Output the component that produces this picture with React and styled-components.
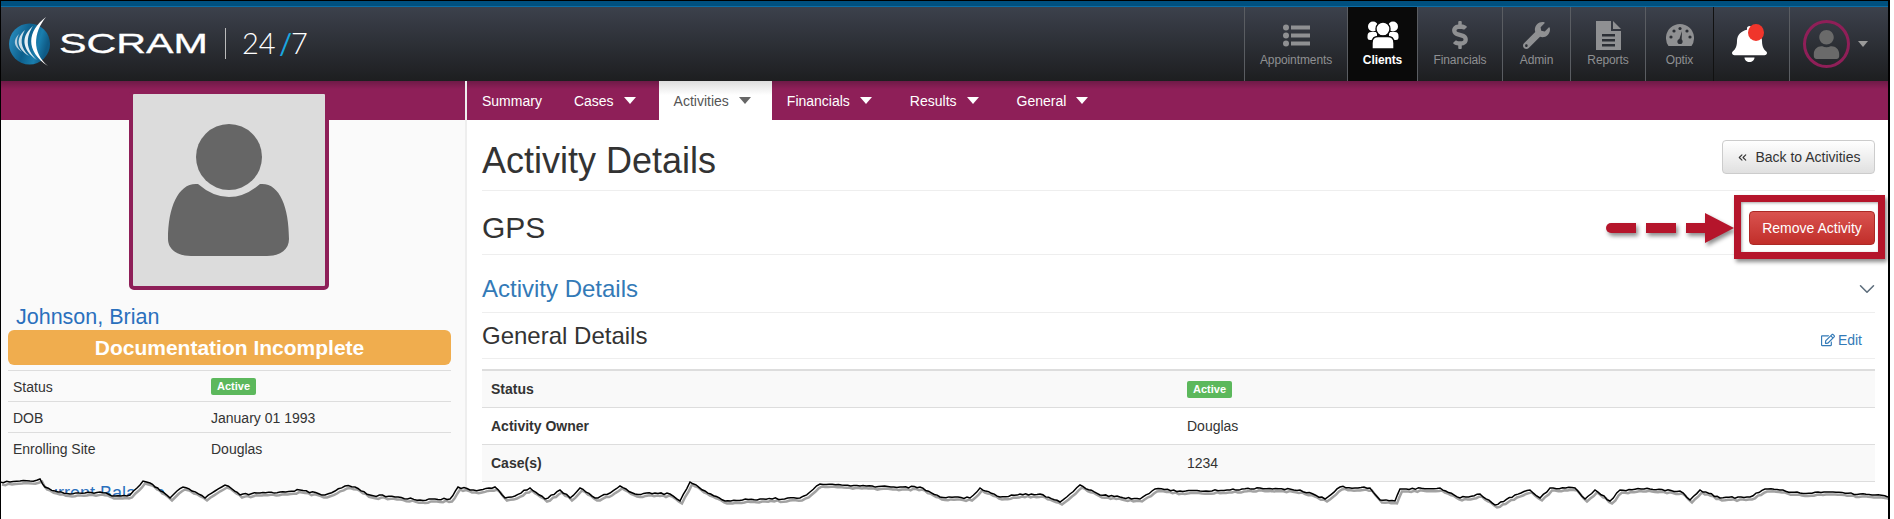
import React from 'react';
import styled, { createGlobalStyle } from 'styled-components';
import { FaDollarSign, FaWrench, FaBell, FaUser, FaRegEdit } from 'react-icons/fa';
import { ChevronDown, ChevronsLeft } from 'lucide-react';

const GlobalStyle = createGlobalStyle`
  html, body {
    margin: 0;
    background: #fff;
    overflow: hidden;
  }
  * { box-sizing: border-box; }
`;

const Page = styled.div`
  position: relative;
  width: 1890px;
  height: 519px;
  overflow: hidden;
  border-left: 1px solid #000;
  border-right: 2px solid #000;
  border-top: 1px solid #000;
  background: #fff;
  font-family: "Liberation Sans", Arial, sans-serif;
  font-size: 14px;
  color: #333;
`;

const BlueBand = styled.div`
  height: 6px;
  background: #00507f;
  border-bottom: 1px solid #0a6ea8;
`;

const Header = styled.header`
  display: flex;
  justify-content: space-between;
  height: 74px;
  background: linear-gradient(#3c414c, #1d1e20);
`;

const LogoWrap = styled.svg`
  width: 320px;
  height: 74px;
  flex: none;
`;

const NavList = styled.nav`
  display: flex;
  height: 74px;
`;

const NavItem = styled.div`
  width: ${({ $w }) => $w}px;
  display: flex;
  flex-direction: column;
  align-items: center;
  padding-top: 14px;
  border-left: 1px solid #5a5d62;
  color: ${({ $active }) => ($active ? '#fff' : '#8f9092')};
  background: ${({ $active }) => ($active ? '#0a0a0a' : 'transparent')};
  font-size: 12px;
  letter-spacing: -0.1px;
  font-weight: ${({ $active }) => ($active ? 700 : 400)};
`;

const NavIcon = styled.div`
  height: 28px;
  display: flex;
  align-items: center;
  justify-content: center;
  font-size: ${({ $size }) => $size || 26}px;
  margin-bottom: 4px;
`;

const BellItem = styled.div`
  position: relative;
  width: 76px;
  display: flex;
  align-items: center;
  justify-content: center;
  border-left: 1px solid #111;
  color: #fff;
`;

const BellIcon = styled(FaBell)`
  width: 35px;
  height: 36px;
  margin-right: 4px;
`;

const BellDot = styled.span`
  position: absolute;
  left: 34px;
  top: 17px;
  width: 16px;
  height: 17px;
  border-radius: 50%;
  background: #f0352b;
`;

const UserItem = styled.div`
  width: 99px;
  display: flex;
  align-items: center;
  padding-left: 13px;
  gap: 8px;
  border-left: 1px solid #5a5d62;
`;

const UserRing = styled.div`
  width: 47px;
  height: 48px;
  border: 3px solid #8f1f58;
  border-radius: 50%;
  display: flex;
  align-items: center;
  justify-content: center;
  color: #6a6a6a;
  font-size: 29px;
`;

const Caret = styled.span`
  display: inline-block;
  width: 0;
  height: 0;
  border-left: ${({ $s }) => $s || 6}px solid transparent;
  border-right: ${({ $s }) => $s || 6}px solid transparent;
  border-top: ${({ $s }) => ($s ? $s + 1 : 7)}px solid ${({ $color }) => $color || '#fff'};
  margin-left: ${({ $ml }) => $ml ?? 10}px;
`;

const Body = styled.div`
  display: flex;
  align-items: stretch;
`;

const Sidebar = styled.aside`
  width: 464px;
  flex: none;
  height: 438px;
  background: #fafafa;
`;

const SideBand = styled.div`
  height: 39px;
  background: linear-gradient(#6e1a47 0, #8e1f58 8px);
`;

const AvatarBox = styled.div`
  width: 200px;
  height: 200px;
  margin: -30px 0 0 128px;
  border: 4px solid #8e1f58;
  border-radius: 5px;
  background: #dcdcdc;
`;

const AvatarSvg = styled.svg`
  display: block;
  width: 192px;
  height: 192px;
`;

const ClientName = styled.div`
  margin: 15px 0 0 15px;
  font-size: 21.5px;
  line-height: 25px;
  color: #2a70bd;
`;

const SideInner = styled.div`
  margin: 0 14px 0 7px;
`;

const Banner = styled.div`
  height: 35px;
  border-radius: 6px;
  background: #f0ad4e;
  color: #fff;
  font-size: 21px;
  font-weight: 700;
  line-height: 36px;
  text-align: center;
`;

const InfoTable = styled.table`
  width: 100%;
  margin-top: 5px;
  border-collapse: collapse;
  table-layout: fixed;
  border-top: 1px solid #ddd;

  td {
    height: 31px;
    padding: 1px 5px 0;
    border-bottom: 1px solid #ddd;
  }
  td:first-child { width: 203px; }
  td:last-child { padding-left: 0; }
  tr:last-child td { border-bottom: 0; }
`;

const Badge = styled.span`
  display: inline-block;
  height: 17px;
  padding: 0 6px;
  border-radius: 2px;
  background: #5cb85c;
  color: #fff;
  font-size: 11px;
  font-weight: 700;
  line-height: 17px;
  vertical-align: middle;
`;

const SideLink = styled.div`
  margin: 19px 0 0 34px;
  font-size: 18px;
  line-height: 20px;
  color: #2a70bd;
`;

const Main = styled.main`
  flex: 1;
  border-left: 2px solid #eee;
`;

const TabBar = styled.div`
  display: flex;
  height: 39px;
  background: linear-gradient(#6e1a47 0, #8e1f58 8px);
`;

const Tab = styled.div`
  display: flex;
  align-items: center;
  padding: 0 ${({ $pr }) => $pr || 15}px 0 15px;
  color: ${({ $active }) => ($active ? '#555' : '#fff')};
  background: ${({ $active }) => ($active ? 'linear-gradient(#ddd 0, #fff 14px)' : 'transparent')};
  font-size: 14px;
`;

const Content = styled.div`
  padding: 0 13px 0 15px;
`;

const SectionRow = styled.div`
  height: ${({ $h }) => $h}px;
  padding-top: ${({ $pt }) => $pt || 0}px;
  display: flex;
  align-items: center;
  justify-content: space-between;
  border-bottom: 1px solid #eee;
`;

const PageTitle = styled.h1`
  margin: 8px 0 0;
  font-size: 36px;
  font-weight: 400;
  color: #333;
`;

const BackButton = styled.button`
  width: 153px;
  height: 34px;
  display: flex;
  align-items: center;
  justify-content: center;
  gap: 6px;
  border: 1px solid #ccc;
  border-radius: 4px;
  background: linear-gradient(#fff, #e0e0e0);
  color: #333;
  font: 14px "Liberation Sans", Arial, sans-serif;
`;

const GpsTitle = styled.h2`
  margin: 0;
  font-size: 30px;
  font-weight: 400;
  color: #333;
`;

const RemoveButton = styled.button`
  width: 126px;
  height: 34px;
  border: 1px solid #ac2925;
  border-radius: 4px;
  background: linear-gradient(#d9534f, #c12e2a);
  color: #fff;
  font: 14px "Liberation Sans", Arial, sans-serif;
`;

const AccordionTitle = styled.h3`
  margin: 0;
  font-size: 24px;
  font-weight: 400;
  color: #337ab7;
`;

const Chevron = styled.span`
  display: flex;
  margin-right: -5px;
  color: #5d6d7c;
`;

const SubTitle = styled.h3`
  margin: 0;
  font-size: 24px;
  font-weight: 400;
  color: #333;
`;

const EditLink = styled.span`
  display: flex;
  align-items: center;
  gap: 3px;
  margin: 8px 13px 0 0;
  color: #337ab7;
  font-size: 14px;
`;

const DetailTable = styled.table`
  width: 100%;
  margin-top: 10px;
  border-collapse: collapse;
  table-layout: fixed;
  border-top: 2px solid #ddd;

  td {
    height: 37px;
    padding: 0 9px;
    border-bottom: 1px solid #ddd;
  }
  td:first-child {
    width: 705px;
    font-weight: 700;
  }
  td:last-child { padding-left: 0; }
  tr:nth-child(odd) { background: #f9f9f9; }
`;

const CalloutFrame = styled.div`
  position: absolute;
  left: 1733px;
  top: 194px;
  width: 151px;
  height: 64px;
  border: 7px solid #b5152b;
  box-shadow: 2px 3px 4px rgba(0, 0, 0, 0.45), inset 1px 1px 3px rgba(0, 0, 0, 0.35);
  pointer-events: none;
`;

const CalloutArrow = styled.svg`
  position: absolute;
  left: 1600px;
  top: 205px;
  width: 136px;
  height: 46px;
  filter: drop-shadow(2px 3px 2px rgba(0, 0, 0, 0.45));
`;

const TornEdge = styled.svg`
  position: absolute;
  left: -1px;
  top: -1px;
  width: 1894px;
  height: 519px;
  pointer-events: none;
`;

// traced outline of the torn bottom edge
const TORN = [
  [0,482],[10,482],[20,481],[30,481],[40,479],[45,487],[55,491],[70,494],[85,493],[100,492],[115,496],[130,495],[137,488],[143,481],[150,483],[155,487],[163,492],[170,498],[177,491],[183,487],[192,491],[205,498],[215,491],[225,485],[232,489],[240,495],[260,493],[280,492],[300,490],[325,495],[335,491],[345,486],[355,487],[370,495],[395,497],[420,500],[435,499],[450,499],[458,487],[470,490],[480,490],
  [495,487],[505,498],[515,496],[530,488],[545,499],[560,490],[570,498],[580,488],[595,498],[610,493],[620,486],[635,494],[655,493],[670,494],[680,501],[690,482],[705,491],[725,501],[760,499],[800,498],[810,492],[820,484],[860,486],[900,487],[920,487],[940,497],[955,497],[970,498],[980,488],[1000,497],[1020,494],[1040,494],[1060,502],[1070,494],[1080,485],[1100,495],[1120,497],[1140,499],[1155,489],[1180,491],[1200,491],[1230,490],
  [1260,488],[1300,490],[1325,499],[1340,487],[1370,488],[1380,500],[1395,501],[1400,489],[1440,488],[1460,498],[1480,494],[1495,505],[1515,495],[1530,490],[1540,498],[1550,488],[1575,488],[1585,499],[1595,490],[1610,501],[1620,490],[1650,489],[1680,491],[1690,500],[1700,490],[1720,498],[1750,497],[1765,489],[1780,490],[1800,493],[1830,492],[1860,494],[1875,495],[1888,497],
];

const jitter = (i) => {
  const v = Math.sin(i * 12.9898) * 43758.5453;
  return (v - Math.floor(v) - 0.5) * 1.8;
};

const buildTorn = () => {
  const pts = [];
  TORN.forEach(([x, y], i) => {
    if (i === 0) {
      pts.push([x, y]);
      return;
    }
    const [px, py] = TORN[i - 1];
    const steps = Math.max(1, Math.round((x - px) / 3));
    for (let s = 1; s <= steps; s++) {
      const t = s / steps;
      const n = s === steps ? 0 : jitter(pts.length);
      pts.push([px + (x - px) * t, py + (y - py) * t + n]);
    }
  });
  return pts.map(([x, y]) => `${x.toFixed(1)} ${y.toFixed(1)}`).join(' L');
};

const tornLine = buildTorn();

const ListIcon = () => (
  <svg width="27" height="23" viewBox="0 0 27 23" fill="currentColor">
    <circle cx="3" cy="3.5" r="3" />
    <circle cx="3" cy="11.5" r="3" />
    <circle cx="3" cy="19.5" r="3" />
    <rect x="8" y="1.5" width="19" height="4" />
    <rect x="8" y="9.5" width="19" height="4" />
    <rect x="8" y="17.5" width="19" height="4" />
  </svg>
);

const ClientsIcon = () => (
  <svg width="32" height="28" viewBox="0 0 32 28" fill="currentColor">
    <circle cx="6" cy="5.5" r="5" />
    <circle cx="26" cy="5.5" r="5" />
    <path d="M0.5 15 Q0.5 11 4 11 H10 V19 H3 Q0.5 19 0.5 17Z" />
    <path d="M31.5 15 Q31.5 11 28 11 H22 V19 H29 Q31.5 19 31.5 17Z" />
    <circle cx="16" cy="8" r="7" stroke="#0a0a0a" strokeWidth="1.4" />
    <path d="M5 28 V22 Q5 15 12 15.5 H20 Q27 15 27 22 V28Z" stroke="#0a0a0a" strokeWidth="1.4" />
  </svg>
);

const ReportsIcon = () => (
  <svg width="25" height="29" viewBox="0 0 25 29">
    <path d="M0 0 H15 V10 H25 V29 H0Z" fill="currentColor" />
    <path d="M17 0 L25 8 H17Z" fill="currentColor" />
    <rect x="6" y="13" width="13" height="2.5" fill="#2c2f35" />
    <rect x="6" y="18" width="13" height="2.5" fill="#2c2f35" />
    <rect x="6" y="23" width="13" height="2.5" fill="#2c2f35" />
  </svg>
);

const OptixIcon = () => (
  <svg width="28" height="22" viewBox="0 0 28 22">
    <path d="M2.5 22 A14 14 0 1 1 25.5 22Z" fill="currentColor" />
    <g fill="#2c2f35">
      <circle cx="5" cy="13" r="1.6" />
      <circle cx="8" cy="7" r="1.6" />
      <circle cx="14" cy="4.5" r="1.6" />
      <circle cx="21" cy="7" r="1.6" />
      <circle cx="24" cy="13" r="1.6" />
      <circle cx="14" cy="17.5" r="2.6" />
      <path d="M13 16 L16 7 L15.6 17Z" />
    </g>
  </svg>
);

const navItems = [
  { label: 'Appointments', icon: <ListIcon />, w: 103 },
  { label: 'Clients', icon: <ClientsIcon />, w: 70, active: true },
  { label: 'Financials', icon: <FaDollarSign />, w: 85, size: 28 },
  { label: 'Admin', icon: <FaWrench />, w: 68, size: 27 },
  { label: 'Reports', icon: <ReportsIcon />, w: 75 },
  { label: 'Optix', icon: <OptixIcon />, w: 68 },
];

const tabs = [
  { label: 'Summary', pr: 17 },
  { label: 'Cases', caret: true, pr: 23 },
  { label: 'Activities', caret: true, active: true, pr: 21 },
  { label: 'Financials', caret: true, pr: 23 },
  { label: 'Results', caret: true, pr: 23 },
  { label: 'General', caret: true, pr: 23 },
];

const Logo = () => (
  <LogoWrap viewBox="0 0 320 74">
    <defs>
      <linearGradient id="globe" x1="0" y1="0" x2="1" y2="0.3">
        <stop offset="0" stopColor="#2f95c8" />
        <stop offset="0.5" stopColor="#0d5f8c" />
        <stop offset="0.8" stopColor="#1a7eae" />
        <stop offset="1" stopColor="#0f5a85" />
      </linearGradient>
    </defs>
    <circle cx="28.5" cy="37" r="20.5" fill="url(#globe)" />
    <path d="M45 10 C26 24 24 44 47 59 C31 46 32 26 45 10Z" fill="#fff" />
    <path d="M32 19 C20 29 20 42 36 53 C24 42 25 30 32 19Z" fill="#e6f0f6" />
    <path d="M24 23 C15 31 15 41 28 49 C19 40 19 32 24 23Z" fill="#cfe0ea" />
    <path d="M18 27 C12 33 12 39 21 45 C15 39 15 33 18 27Z" fill="#b5cddd" />
    <text x="58" y="46" fontFamily="'Liberation Sans', Arial, sans-serif" fontSize="28" fill="#fff" stroke="#fff" strokeWidth="0.3" textLength="149" lengthAdjust="spacingAndGlyphs">SCRAM</text>
    <rect x="224" y="21" width="1" height="31" fill="#bbb" />
    <text x="241" y="47" fontFamily="Lato, sans-serif" fontWeight="300" fontSize="29" fill="#fff">24</text>
    <text x="278" y="47" fontFamily="Lato, sans-serif" fontWeight="400" fontSize="29" fill="#19a7e0">/</text>
    <text x="290" y="47" fontFamily="Lato, sans-serif" fontWeight="300" fontSize="29" fill="#fff">7</text>
  </LogoWrap>
);

const App = () => (
  <>
    <GlobalStyle />
    <Page>
      <BlueBand />
      <Header>
        <Logo />
        <NavList>
          {navItems.map((n) => (
            <NavItem key={n.label} $w={n.w} $active={n.active}>
              <NavIcon $size={n.size}>{n.icon}</NavIcon>
              {n.label}
            </NavItem>
          ))}
          <BellItem>
            <BellIcon preserveAspectRatio="none" />
            <BellDot />
          </BellItem>
          <UserItem>
            <UserRing><FaUser /></UserRing>
            <Caret $s={5} $color="#9a9a9a" $ml={0} />
          </UserItem>
        </NavList>
      </Header>
      <Body>
        <Sidebar>
          <SideBand />
          <AvatarBox>
            <AvatarSvg viewBox="0 0 192 192">
              <circle cx="96" cy="63" r="33" fill="#666" />
              <path d="M65 90 Q80 103 96 103 Q112 103 127 90 C146 88 156 112 156 145 C156 155 148 162 134 162 L58 162 C44 162 35 155 35 145 C35 112 46 88 65 90Z" fill="#666" />
            </AvatarSvg>
          </AvatarBox>
          <ClientName>Johnson, Brian</ClientName>
          <SideInner>
            <Banner>Documentation Incomplete</Banner>
            <InfoTable>
              <tbody>
                <tr><td>Status</td><td><Badge>Active</Badge></td></tr>
                <tr><td>DOB</td><td>January 01 1993</td></tr>
                <tr><td>Enrolling Site</td><td>Douglas</td></tr>
              </tbody>
            </InfoTable>
          </SideInner>
          <SideLink>Current Balance</SideLink>
        </Sidebar>
        <Main>
          <TabBar>
            {tabs.map((t) => (
              <Tab key={t.label} $active={t.active} $pr={t.pr}>
                {t.label}
                {t.caret && <Caret $color={t.active ? '#666' : '#fff'} />}
              </Tab>
            ))}
          </TabBar>
          <Content>
            <SectionRow $h={71} $pt={4}>
              <PageTitle>Activity Details</PageTitle>
              <BackButton><ChevronsLeft size={13} strokeWidth={2} />Back to Activities</BackButton>
            </SectionRow>
            <SectionRow $h={64} $pt={10}>
              <GpsTitle>GPS</GpsTitle>
              <RemoveButton>Remove Activity</RemoveButton>
            </SectionRow>
            <SectionRow $h={58} $pt={10}>
              <AccordionTitle>Activity Details</AccordionTitle>
              <Chevron><ChevronDown size={26} strokeWidth={1.4} /></Chevron>
            </SectionRow>
            <SectionRow $h={46}>
              <SubTitle>General Details</SubTitle>
              <EditLink><FaRegEdit />Edit</EditLink>
            </SectionRow>
            <DetailTable>
              <tbody>
                <tr><td>Status</td><td><Badge>Active</Badge></td></tr>
                <tr><td>Activity Owner</td><td>Douglas</td></tr>
                <tr><td>Case(s)</td><td>1234</td></tr>
              </tbody>
            </DetailTable>
          </Content>
        </Main>
      </Body>
      <CalloutArrow viewBox="0 0 136 46">
        <path d="M10 17 H35 V27 H10 A5 5 0 0 1 10 17Z" fill="#b5152b" />
        <rect x="45" y="17" width="30" height="10" fill="#b5152b" />
        <rect x="85" y="17" width="20" height="10" fill="#b5152b" />
        <polygon points="104,7 133,22 104,37" fill="#b5152b" />
      </CalloutArrow>
      <CalloutFrame />
      <TornEdge viewBox="0 0 1894 519">
        <path d={`M${tornLine} L1894 497 L1894 519 L0 519Z`} fill="#fff" />
        <path d={`M${tornLine}`} fill="none" stroke="#555" strokeWidth="2.5" opacity="0.55" transform="translate(2 2.5)" />
        <path d={`M${tornLine}`} fill="none" stroke="#000" strokeWidth="1.5" />
      </TornEdge>
    </Page>
  </>
);

export default App;
